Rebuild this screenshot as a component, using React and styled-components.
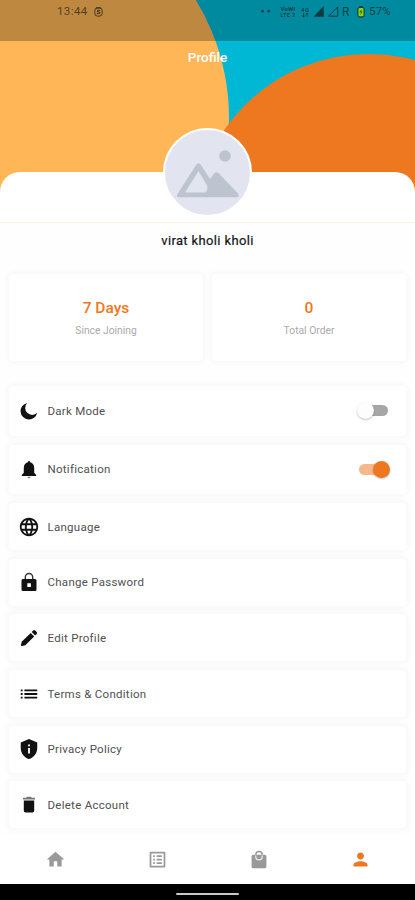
import React, { useState } from 'react'
import styled, { createGlobalStyle } from 'styled-components'
import {
  MdHome,
  MdLanguage,
  MdList,
  MdOutlineListAlt,
  MdPerson,
  MdPrivacyTip
} from 'react-icons/md'

const orange = '#ee7820'

const GlobalStyle = createGlobalStyle`
  * {
    box-sizing: border-box;
  }

  body {
    margin: 0;
    background: #fefefe;
    font-family: Roboto, 'Liberation Sans', sans-serif;
  }

  svg {
    display: block;
  }
`

const Screen = styled.div`
  width: 100%;
  height: 900px;
  display: flex;
  flex-direction: column;
  overflow: hidden;
  background: #fefefe;
`

const Hero = styled.header`
  height: 223px;
  flex: none;
  display: flex;
  flex-direction: column;
  position: relative;
  border-bottom: 1px solid #fff0e2;
`

const Backdrop = styled.svg`
  position: absolute;
  top: 0;
  left: 0;
`

const StatusBar = styled.div`
  height: 41px;
  flex: none;
  display: flex;
  justify-content: space-between;
  padding: 4px 24px 0 57px;
  position: relative;
  background: rgba(0, 0, 0, 0.25);
  color: rgba(20, 22, 20, 0.68);
  font-size: 11.5px;
  line-height: 15px;
`

const StatusGroup = styled.div`
  height: 15px;
  display: flex;
  align-items: center;
`

const Clock = styled.span`
  width: 37px;
  letter-spacing: 0.4px;
`

const Percent = styled.span`
  margin-left: 4px;
  letter-spacing: 0.2px;
`

const Title = styled.h1`
  margin: 7px 0 0;
  position: relative;
  color: #fff;
  font-size: 13.5px;
  font-weight: 500;
  line-height: 18px;
  text-align: center;
`

const Sheet = styled.div`
  height: 50px;
  margin-top: auto;
  display: flex;
  justify-content: center;
  position: relative;
  border-radius: 20px 20px 0 0;
  background: #fff;
`

const Avatar = styled.div`
  width: 89px;
  height: 89px;
  margin-top: -44px;
  flex: none;
  overflow: hidden;
  border: 2px solid #fff;
  border-radius: 50%;
  background: #e2e5f0;
`

const Name = styled.h2`
  margin: 9px 0 0;
  color: #151515;
  font-size: 13px;
  font-weight: 400;
  line-height: 18px;
  letter-spacing: 0.36px;
  text-align: center;
  -webkit-text-stroke: 0.2px #151515;
`

const Card = styled.div`
  border-radius: 4px;
  background: #fff;
  box-shadow: 0 0 5px 2px rgba(0, 0, 0, 0.03);
`

const Stats = styled.section`
  height: 87px;
  margin: 24px 9px 0;
  flex: none;
  display: grid;
  grid-template-columns: 1fr 1fr;
  gap: 9px;
`

const Stat = styled(Card)`
  display: flex;
  flex-direction: column;
  align-items: center;
  padding-top: 23px;
`

const StatValue = styled.strong`
  color: ${orange};
  font-size: 15.5px;
  font-weight: 500;
  line-height: 22px;
`

const StatLabel = styled.span`
  margin-top: 4px;
  color: #aaa;
  font-size: 10.3px;
  line-height: 15px;
`

const Menu = styled.section`
  min-height: 0;
  margin: 25px 9px 0;
  flex: 1;
  display: flex;
  flex-direction: column;
`

const Row = styled(Card)`
  height: ${props => props.$tall ? '49.5px' : '47px'};
  margin-bottom: ${props => props.$tall ? '9px' : '8.7px'};
  flex: none;
  display: flex;
  align-items: center;
  padding: 0 18px 0 8px;
`

const RowIcon = styled.span`
  width: 23px;
  margin-right: 7.5px;
  display: flex;
  justify-content: center;
  color: #111;
  font-size: 22px;
`

const RowLabel = styled.span`
  flex: 1;
  color: #505050;
  font-size: 11.5px;
  letter-spacing: 0.27px;
`

const Track = styled.button`
  width: 29px;
  height: 11px;
  display: flex;
  align-items: center;
  justify-content: ${props => props.$on ? 'flex-end' : 'flex-start'};
  padding: 0;
  border: none;
  border-radius: 6px;
  background: ${props => props.$on ? '#f6b78b' : '#a6a6a6'};
  cursor: pointer;
`

const Thumb = styled.span`
  width: 17px;
  height: 17px;
  margin: 0 -2px;
  flex: none;
  border-radius: 50%;
  background: ${props => props.$on ? orange : '#fdfdfd'};
  box-shadow: 0 1px 2px rgba(0, 0, 0, 0.25);
`

const Nav = styled.nav`
  height: 49px;
  flex: none;
  display: flex;
  align-items: center;
  padding: 0 4px 0 5px;
  position: relative;
  background: #fff;
`

const NavItem = styled.span`
  flex: 1;
  display: flex;
  justify-content: center;
  color: ${props => props.$active ? orange : '#999'};
  font-size: 21px;
`

const GestureBar = styled.div`
  height: 16px;
  flex: none;
  display: flex;
  justify-content: center;
  padding-top: 9px;
  position: relative;
  background: #000;
`

const Pill = styled.span`
  width: 63px;
  height: 2px;
  border-radius: 1px;
  background: #c9c9c9;
`

function MoonIcon() {
  return (
    <svg width="18" height="18" viewBox="0 0 18 18" fill="currentColor">
      <path d="M7.2.9A6.7 6.7 0 0 0 17.2 10.8 8.4 8.4 0 1 1 7.2.9z" />
    </svg>
  )
}

function BellIcon() {
  return (
    <svg width="16" height="19" viewBox="0 0 16 19" fill="currentColor">
      <path d="M8 1q1 0 1.2 1.3 3.9 1 4 5.7v4.7l2 2.4v1H.8v-1l2-2.4V8q.1-4.7 4-5.7Q7 1 8 1z" />
      <path d="M6.3 16.8h3.4Q9.3 18.4 8 18.4t-1.7-1.6z" fill="#888" />
    </svg>
  )
}

function LockIcon() {
  return (
    <svg width="16" height="20" viewBox="0 0 16 20">
      <path d="M4.3 8V5.2a3.7 3.7 0 0 1 7.4 0V8" fill="none" stroke="#333" strokeWidth="1.4" />
      <path fillRule="evenodd" fill="currentColor" d="M2 7h12q1.5 0 1.5 1.5v9q0 1.5-1.5 1.5H2Q.5 19 .5 17.5v-9Q.5 7 2 7zm4.3 4.3v3.6h3.6v-3.6z" />
    </svg>
  )
}

function PencilIcon() {
  return (
    <svg width="18" height="18" viewBox="0 0 18 18" fill="currentColor">
      <path d="M10.7 3.9l3.5 3.5-8.9 8.9-3.2.7q-1.3.2-1.1-1.1l.7-3.1z" />
      <path d="M11.7 2.9l1.5-1.5q1-.9 2 0l1.5 1.5q.9 1 0 2l-1.5 1.5z" />
    </svg>
  )
}

function TrashIcon() {
  return (
    <svg width="14" height="17" viewBox="0 0 14 17">
      <path d="M1 1.8h3.2L5 .8h4l.8 1H13v1.7H1z" fill="#777" />
      <path d="M1.8 4.4h10.4v10.4q0 1.7-1.7 1.7h-7q-1.7 0-1.7-1.7z" fill="currentColor" />
    </svg>
  )
}

function BagIcon() {
  return (
    <svg width="16" height="19" viewBox="0 0 16 19">
      <rect x=".6" y="4.8" width="14.8" height="13.4" rx="1.5" fill="currentColor" />
      <path d="M4.8 4.8a3.2 3.2 0 0 1 6.4 0" fill="none" stroke="currentColor" strokeWidth="1.5" />
      <path d="M4.8 5.2v2a3.2 2.6 0 0 0 6.4 0v-2" fill="none" stroke="#e8e8e8" strokeWidth="1.2" />
    </svg>
  )
}

const links = [
  { label: 'Language', icon: <MdLanguage /> },
  { label: 'Change Password', icon: <LockIcon /> },
  { label: 'Edit Profile', icon: <PencilIcon /> },
  { label: 'Terms & Condition', icon: <MdList /> },
  { label: 'Privacy Policy', icon: <MdPrivacyTip /> },
  { label: 'Delete Account', icon: <TrashIcon /> }
]

function StatusIcons() {
  return (
    <svg width="104" height="14" viewBox="0 0 104 14" fill="currentColor">
      <circle cx="1.6" cy="6.2" r="1.4" />
      <circle cx="7.8" cy="6.2" r="1.4" />
      <g fontFamily="Roboto" fontWeight="700">
        <text x="19.5" y="6.3" fontSize="6" textLength="14.5">VoWi</text>
        <text x="19.5" y="12" fontSize="5" textLength="14.5">LTE 2</text>
        <text x="40" y="6.5" fontSize="6" textLength="8">4G</text>
      </g>
      <path d="M42.5 8v4M41 10.5l1.5 1.7 1.5-1.7M46 12V8M44.5 9.5L46 7.8l1.5 1.7" fill="none" stroke="currentColor" strokeWidth=".8" />
      <path d="M62.8 1v10.7H52.3z" />
      <path d="M76.7 2v9.2h-9.2z" fill="none" stroke="currentColor" />
      <text x="81" y="10.5" fontSize="12" fontFamily="Roboto">R</text>
      <rect x="98.5" y="1" width="3" height="2" />
      <rect x="97" y="2.5" width="6" height="9.3" rx="1.5" fill="#86d81e" stroke="currentColor" strokeWidth="1.2" />
      <path d="M100.5 4l-2 3.3h1.3L99.5 10l2-3.4h-1.3z" />
    </svg>
  )
}

function Switch({ on, onClick }) {
  return (
    <Track $on={on} onClick={onClick} role="switch" aria-checked={on}>
      <Thumb $on={on} />
    </Track>
  )
}

function App() {
  const [darkMode, setDarkMode] = useState(false)
  const [notification, setNotification] = useState(true)

  return (
    <Screen>
      <GlobalStyle />
      <Hero>
        <Backdrop width="415" height="200" viewBox="0 0 415 200">
          <rect width="415" height="200" fill="#00b8d4" />
          <circle cx="2" cy="118" r="227" fill="#ffb657" />
          <circle cx="368.5" cy="229" r="175" fill={orange} />
        </Backdrop>
        <StatusBar>
          <StatusGroup>
            <Clock>13:44</Clock>
            <svg width="9" height="10" viewBox="0 0 9 10" fill="none" stroke="currentColor">
              <rect x=".8" y=".8" width="7.4" height="8.4" rx="3" />
              <path d="M6.2 3.3H3.4v1.6h2.3v1.7H2.8M2 .9h5" />
            </svg>
          </StatusGroup>
          <StatusGroup>
            <StatusIcons />
            <Percent>57%</Percent>
          </StatusGroup>
        </StatusBar>
        <Title>Profile</Title>
        <Sheet>
          <Avatar>
            <svg width="85" height="85" viewBox="0 0 85 85">
              <circle cx="60" cy="26" r="5.8" fill="#bdc4d0" />
              <path d="M14 66 33.5 36 44 52 51.5 42.5 73 64Q75 67.2 71.5 67.2H14.5Q10.5 67.2 12.5 64L31 35Q33.5 31.5 36 35L45 49l4-5.5Q51.5 41 54 43.5L73.5 64z" fill="#bdc4d0" />
              <path d="M20 62.5 33.5 41 41.5 54.5Q44 59.5 40 62.5z" fill="#e2e5f0" />
            </svg>
          </Avatar>
        </Sheet>
      </Hero>
      <Name>virat kholi kholi</Name>
      <Stats>
        <Stat>
          <StatValue>7 Days</StatValue>
          <StatLabel>Since Joining</StatLabel>
        </Stat>
        <Stat>
          <StatValue>0</StatValue>
          <StatLabel>Total Order</StatLabel>
        </Stat>
      </Stats>
      <Menu>
        <Row $tall>
          <RowIcon><MoonIcon /></RowIcon>
          <RowLabel>Dark Mode</RowLabel>
          <Switch on={darkMode} onClick={() => setDarkMode(!darkMode)} />
        </Row>
        <Row $tall>
          <RowIcon><BellIcon /></RowIcon>
          <RowLabel>Notification</RowLabel>
          <Switch on={notification} onClick={() => setNotification(!notification)} />
        </Row>
        {links.map(item => (
          <Row key={item.label}>
            <RowIcon>{item.icon}</RowIcon>
            <RowLabel>{item.label}</RowLabel>
          </Row>
        ))}
      </Menu>
      <Nav>
        <NavItem><MdHome /></NavItem>
        <NavItem><MdOutlineListAlt /></NavItem>
        <NavItem><BagIcon /></NavItem>
        <NavItem $active><MdPerson /></NavItem>
      </Nav>
      <GestureBar>
        <Pill />
      </GestureBar>
    </Screen>
  )
}

export default App
